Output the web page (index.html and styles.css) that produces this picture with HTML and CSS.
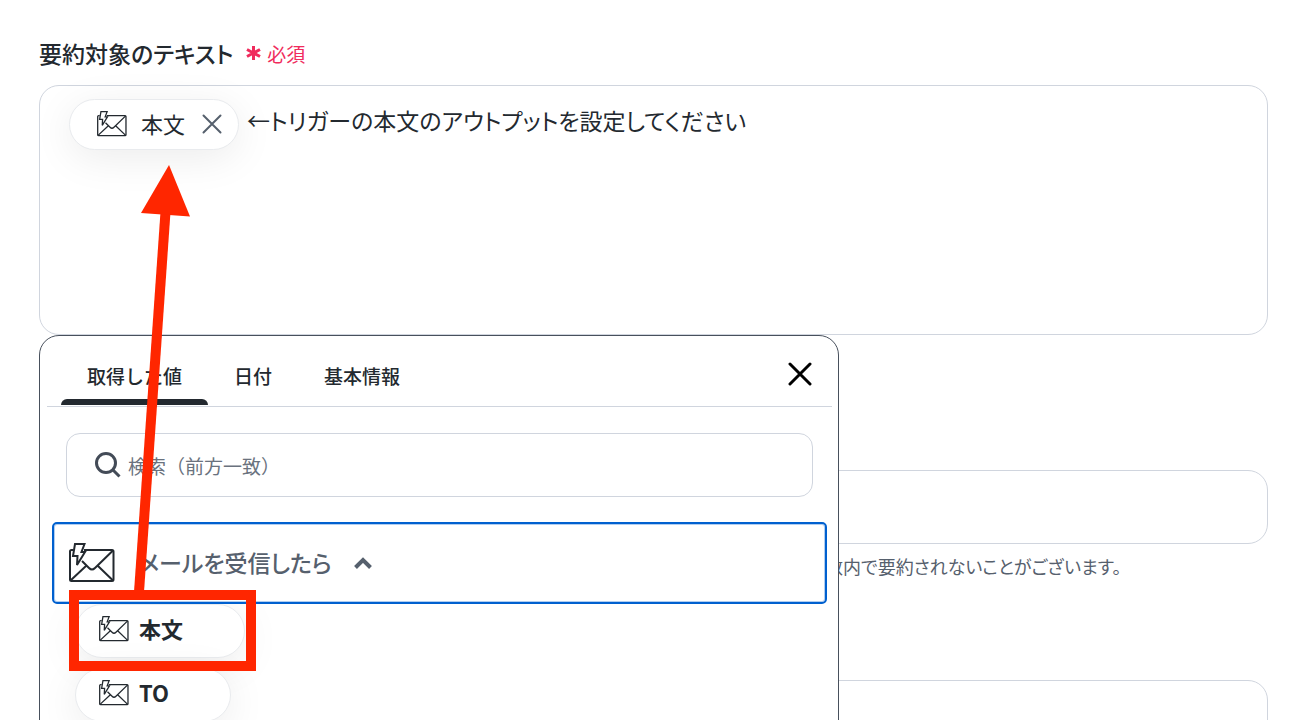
FILE: index.html
```html
<!DOCTYPE html>
<html lang="ja">
<head>
<meta charset="UTF-8">
<title>要約対象のテキスト</title>
<link rel="stylesheet" href="styles.css">
</head>
<body>

<svg class="defs" width="0" height="0" aria-hidden="true">
  <symbol id="mail" viewBox="0 0 46 40">
    <path d="M4 7H2.5Q1 7 1 8.500V36.500Q1 38 2.500 38H43Q44.500 38 44.500 36.500V8.500Q44.500 7 43 7H15"/>
    <path d="M1.500 37.500L17 23M44 37.500L29 23M44 7.500L26 25Q23 28 20 25L13 18"/>
    <path d="M6 1H15.500L12.500 9H16L8 22L8.500 13H4Z"/>
  </symbol>
</svg>

<main class="page">
  <div class="label" id="targetLabel">要約対象のテキスト<span class="required"><svg width="15" height="16" viewBox="0 0 15 16"><path d="M7.500 1V15M1 4.500L14 11.500M14 4.500L1 11.500"/></svg>必須</span></div>

  <div class="target">
    <div class="editor" role="textbox" aria-labelledby="targetLabel">
      <span class="token">
        <svg class="mail-small"><use href="#mail"/></svg>
        <span class="name">本文</span>
        <button type="button" class="token-close" aria-label="削除"><svg width="20" height="20" viewBox="0 0 20 20"><path d="M1.500 1.500L18.500 18.500M18.500 1.500L1.500 18.500"/></svg></button>
      </span>
      <span class="editor-text">←トリガーの本文のアウトプットを設定してください</span>
    </div>

    <div class="panel">
      <div class="tabs">
        <button type="button" class="tab active">取得した値</button>
        <button type="button" class="tab">日付</button>
        <button type="button" class="tab">基本情報</button>
        <button type="button" class="panel-close" aria-label="閉じる"><svg width="24" height="24" viewBox="0 0 24 24"><path d="M2 2L22 22M22 2L2 22"/></svg></button>
      </div>
      <div class="search">
        <svg width="28" height="28" viewBox="0 0 28 28"><circle cx="12" cy="12" r="9.500"/><path d="M19 19L25.500 25.500"/></svg>
        <input type="text" placeholder="検索（前方一致）" aria-label="検索">
      </div>
      <button type="button" class="group">
        <svg class="mail-large"><use href="#mail"/></svg>
        <span class="name">メールを受信したら</span>
        <svg class="chevron" width="18" height="12" viewBox="0 0 18 12"><path d="M1.500 10.500L9 3L16.500 10.500"/></svg>
      </button>
      <div class="outputs">
        <button type="button" class="output"><svg class="mail-small"><use href="#mail"/></svg><span class="name">本文</span></button>
        <button type="button" class="output"><svg class="mail-small"><use href="#mail"/></svg><span class="name">TO</span></button>
      </div>
    </div>
  </div>

  <input type="text" class="field" aria-label="文字数">
  <p class="help">数内で要約されないことがございます。</p>
  <input type="text" class="field" aria-label="条件">

  <svg class="guide" width="260" height="720" viewBox="0 0 260 720">
    <path class="line" d="M165.500 212L139 592"/>
    <path class="head" d="M169 165L190 216.500L141 213Z"/>
    <rect class="line" x="74" y="595" width="177" height="71"/>
  </svg>
</main>

</body>
</html>
```

FILE: styles.css
```css
* {
  box-sizing: border-box;
  margin: 0;
  padding: 0;
}

body {
  background: #fff;
  color: #23292f;
  font-family: "Noto Sans CJK JP", sans-serif;
  font-size: 22px;
  font-feature-settings: "palt";
}

button, input {
  font: inherit;
  font-feature-settings: inherit;
  color: inherit;
  background: none;
  border: none;
}

svg {
  fill: none;
  stroke: currentColor;
  flex-shrink: 0;
}

.defs {
  position: absolute;
}

/* the open panel is cut off at the window's bottom edge */
.page {
  position: relative;
  height: 100vh;
  overflow: hidden;
  padding: 38px 32px 0 39px;
}

.label {
  display: flex;
  align-items: center;
  height: 30px;
  margin-bottom: 17px;
  font-size: 23px;
  font-weight: 500;
}

.required {
  display: flex;
  align-items: center;
  gap: 6px;
  margin-left: 13px;
  color: #f02b5c;
  font-size: 19px;
  font-weight: 400;
}

.required svg {
  stroke-width: 3;
}

.target {
  position: relative;
}

.editor {
  display: flex;
  align-items: flex-start;
  height: 250px;
  padding: 13px 29px;
  border: 1px solid #d0d5de;
  border-radius: 20px;
}

.name {
  padding-bottom: 2px;
}

.token {
  display: flex;
  align-items: center;
  width: 170px;
  height: 51px;
  padding: 0 16px 2px 27px;
  border: 1px solid #e9ebee;
  border-radius: 26px;
  background: #fff;
  box-shadow: 0 8px 40px rgba(0, 0, 0, 0.08);
}

.mail-small {
  width: 30px;
  height: 26px;
  margin-right: 14px;
  stroke-width: 2;
}

.token-close {
  display: flex;
  margin-left: auto;
  color: #56606d;
}

.token-close svg {
  stroke-width: 2;
  stroke-linecap: round;
}

.editor-text {
  margin-left: 8px;
  font-size: 23px;
  line-height: 42px;
}

.panel {
  position: absolute;
  top: 250px;
  left: 0;
  width: 800px;
  height: 480px;
  padding: 0 6px 0 7px;
  border: 1px solid #48505c;
  border-radius: 20px 20px 0 0;
  background: #fff;
}

.tabs {
  display: flex;
  height: 71px;
  padding: 0 20px 0 14px;
  border-bottom: 1px solid #d0d5de;
}

.tab {
  position: relative;
  height: 69px;
  padding: 10px 26px 0;
  font-size: 19px;
  font-weight: 500;
  font-feature-settings: normal;
}

.tab.active::after {
  content: "";
  position: absolute;
  left: 0;
  right: 0;
  bottom: 0;
  height: 6px;
  border-radius: 6px 6px 0 0;
  background: #23292f;
}

.panel-close {
  display: flex;
  align-items: center;
  margin-left: auto;
  padding-top: 6px;
  color: #000;
}

.panel-close svg {
  stroke-width: 3;
  stroke-linecap: round;
}

.search {
  display: flex;
  align-items: center;
  height: 64px;
  margin: 26px 19px 25px;
  padding-left: 27px;
  border: 1px solid #d0d5de;
  border-radius: 14px;
}

.search svg {
  color: #434b57;
  stroke-width: 3;
}

.search input {
  flex: 1;
  margin: 0 20px 0 6px;
  font-size: 19px;
  font-feature-settings: normal;
}

.search input::placeholder {
  color: #6a727e;
}

.group {
  position: relative;
  z-index: 1;
  display: flex;
  align-items: center;
  width: 775px;
  height: 82px;
  margin-left: 5px;
  padding-left: 15px;
  border: 2px solid #0060cf;
  border-radius: 5px;
  background: #fff;
  box-shadow: inset 0 0 0 1px #b0cdf0;
  color: #56606d;
  font-size: 23px;
  font-weight: 500;
}

.mail-large {
  width: 46px;
  height: 40px;
  margin-right: 24px;
  color: #23292f;
  stroke-width: 2;
}

.chevron {
  margin-left: 22px;
  stroke-width: 4;
}

.outputs {
  display: flex;
  flex-direction: column;
  align-items: flex-start;
  gap: 10px;
  padding-left: 28px;
}

.output {
  display: flex;
  align-items: center;
  height: 54px;
  padding: 0 61px 4px 23px;
  border: 1px solid #e9ebee;
  border-radius: 27px;
  background: #fff;
  box-shadow: 0 8px 40px rgba(0, 0, 0, 0.08);
  font-weight: 700;
}

.output .mail-small {
  margin-right: 10px;
}

.field {
  display: block;
  width: 100%;
  height: 74px;
  margin-top: 135px;
  padding: 0 24px;
  border: 1px solid #d0d5de;
  border-radius: 20px;
}

.help {
  height: 26px;
  margin: 9px 0 -34px;
  padding-left: 786px;
  color: #56606d;
  font-size: 18px;
  line-height: 26px;
}

/* red arrow and frame over the form */
.guide {
  position: absolute;
  z-index: 2;
  top: 0;
  left: 0;
}

.guide .line {
  stroke: #ff2600;
  stroke-width: 10;
}

.guide .head {
  fill: #ff2600;
  stroke: none;
}
```
